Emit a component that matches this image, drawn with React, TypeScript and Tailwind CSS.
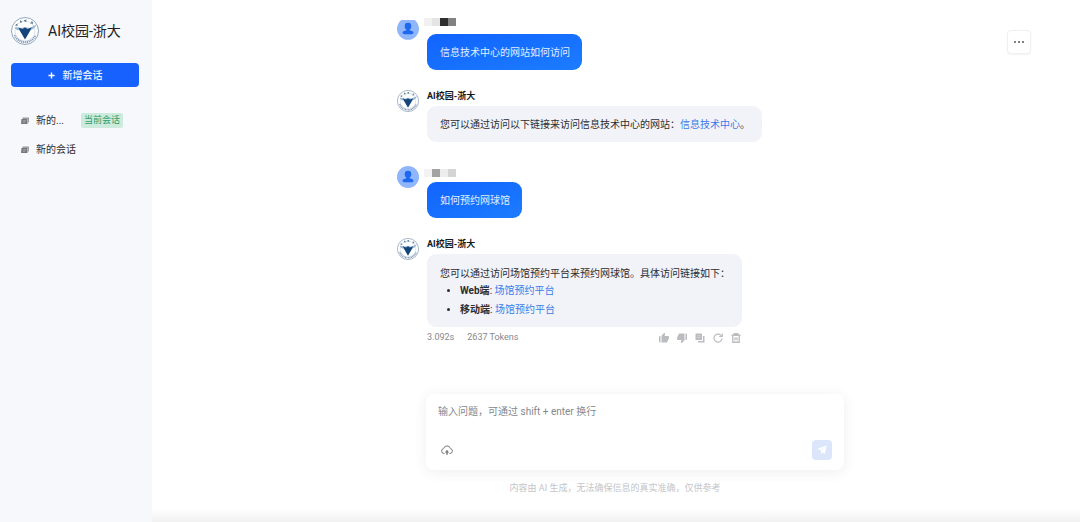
import type { ReactNode } from "react";
import { useState } from "react";
import { BiSolidDislike, BiSolidLike } from "react-icons/bi";

interface Session {
  id: number;
  title: string;
  current?: boolean;
}

const sessions: Session[] = [
  { id: 1, title: "新的...", current: true },
  { id: 2, title: "新的会话" },
];

const BOT_NAME = "AI校园-浙大";

function SchoolLogo({ className }: { className: string }) {
  return (
    <svg viewBox="0 0 56 56" className={className} fill="none" aria-hidden="true">
      <circle cx="28" cy="28" r="27" fill="#fff" stroke="#7891ae" strokeWidth="1.6" />
      <circle cx="28" cy="28" r="20" stroke="#b4c3d4" strokeWidth="1" />
      <path d="M7 36a22.500 22.500 0 0 0 42 0" stroke="#8299b5" strokeWidth="4" strokeDasharray="2.4 1.4" />
      <path
        d="m9 17 4-3m-3 0 3 4M18 8l4 2m-3-3 1 5M30 5l-2 5m-2-3 5 1M41 9l2 5m-4-1 5-3"
        stroke="#4d6f93"
        strokeWidth="1.8"
      />
      <path d="M7 21c5-1 9 0 13 1l8-2 8 2c5-2 9-4 15-7-2 6-7 10-13 12l-10 3-10-3c-5 0-9-2-11-6Z" fill="#9cb9d3" />
      <path d="m15 21 8 3 5-3 5 3 8-3-3 7-10 17-10-17-3-7Z" fill="#14467c" />
    </svg>
  );
}

function UserAvatar({ clipped = false }: { clipped?: boolean }) {
  return (
    <svg viewBox="0 0 22 22" className="size-[22px] shrink-0" aria-hidden="true">
      <path
        d={clipped ? "M4.5 2h13A11 11 0 1 1 4.5 2Z" : "M11 0a11 11 0 1 1 0 22 11 11 0 0 1 0-22Z"}
        fill="#8fb5fb"
      />
      <path
        d="M11 4.8a3.3 3.3 0 0 0-3.3 3.4c0 1.4.6 2.6 1.7 3.3v.8c-2.2.4-3.8 1.2-3.8 2.5 0 1 .6 1.4 1.6 1.4h7.6c1 0 1.6-.4 1.6-1.4 0-1.3-1.6-2.1-3.8-2.5v-.8c1.1-.7 1.7-1.9 1.7-3.3A3.3 3.3 0 0 0 11 4.8Z"
        fill="#1c68ee"
      />
    </svg>
  );
}

function SessionIcon() {
  return (
    <svg viewBox="0 0 16 16" className="size-2 shrink-0" aria-hidden="true">
      <path d="M3 1h13v10h-2V4H3V1Z" fill="#9a9da2" />
      <path d="M1 4h12v10H0L1 4Z" fill="#74777c" />
      <path d="M4 7.500h6M3.500 10.500h5" stroke="#c4c6ca" strokeWidth="1.200" />
    </svg>
  );
}

function CopyIcon() {
  return (
    <svg viewBox="0 0 20 20" className="size-2.5" aria-hidden="true">
      <path d="M2 1h11a1 1 0 0 1 1 1v12H2a1 1 0 0 1-1-1V2a1 1 0 0 1 1-1Z" fill="currentColor" />
      <path d="M16 6h3v13H6v-3h10V6Z" fill="currentColor" />
      <path d="M4 5.500h7M4 9h7" stroke="#e5e6e8" strokeWidth="1" />
    </svg>
  );
}

function RefreshIcon() {
  return (
    <svg viewBox="0 0 20 20" className="size-2.5" fill="none" stroke="currentColor" strokeWidth="2.400" aria-hidden="true">
      <path d="M18 11a8 8 0 1 1-2.500-6.800L18 6.500" />
      <path d="M18.500 1v6h-6" />
    </svg>
  );
}

function TrashIcon() {
  return (
    <svg viewBox="0 0 20 20" className="size-2.5" fill="none" stroke="currentColor" strokeWidth="2.600" aria-hidden="true">
      <path d="M1 4.500h18M6.500 4V1.500h7V4M3.500 5v13.500h13V5M8 8.500v6.500M12 8.500v6.500" />
    </svg>
  );
}

function CloudUploadIcon() {
  return (
    <svg viewBox="0 0 24 24" className="size-3" fill="none" stroke="currentColor" strokeWidth="2" aria-hidden="true">
      <path d="M7 19H6a5 5 0 0 1-.8-9.900 7 7 0 0 1 13.600 0A5 5 0 0 1 18 19h-1" />
      <path d="M12 11.500 7.800 17h2.700v4.500h3V17h2.700L12 11.500Z" fill="currentColor" stroke="none" />
    </svg>
  );
}

function SendIcon() {
  return (
    <svg viewBox="0 0 20 20" className="size-2.5" aria-hidden="true">
      <path d="M19 1 1 7.500l6.500 3.500L19 1Zm0 0-3.500 17-5-3.500L8 19v-7L19 1Z" fill="#fff" />
    </svg>
  );
}

// pixelated block that hides the user's name
function MaskedName({ dark = false }: { dark?: boolean }) {
  return (
    <div className="-ml-[3px] flex h-2 w-8" aria-hidden="true">
      {dark ? (
        <>
          <span className="flex-1 bg-[#f1f1f1]" />
          <span className="flex-1 bg-[#e5e5e5]" />
          <span className="flex-1 bg-[#303030]" />
          <span className="flex-1 bg-[#828282]" />
        </>
      ) : (
        <>
          <span className="flex-1 bg-[#f3f3f3]" />
          <span className="flex-1 bg-[#a3a3a3]" />
          <span className="flex-1 bg-[#ededed]" />
          <span className="flex-1 bg-[#d4d4d4]" />
        </>
      )}
    </div>
  );
}

function UserMessage({ children, first = false }: { children: ReactNode; first?: boolean }) {
  return (
    <div className="flex items-start gap-2">
      <UserAvatar clipped={first} />
      <div>
        <div className={first ? "h-4" : "h-4 pt-[3px]"}>
          <MaskedName dark={first} />
        </div>
        <p className="rounded-[9px] bg-linear-to-br from-[#1263ff] to-[#1d7cff] pt-[11px] pr-3 pb-[9px] pl-[13px] leading-4 text-[#e3eeff]">
          {children}
        </p>
      </div>
    </div>
  );
}

function BotMessage({ children, footer }: { children: ReactNode; footer?: ReactNode }) {
  return (
    <div className="flex items-start gap-2">
      <SchoolLogo className="size-[22px] shrink-0" />
      <div>
        <h2 className="mb-1 text-[9px] leading-3 font-bold text-[#17181a]">{BOT_NAME}</h2>
        <div className="rounded-[9px] bg-[#f2f3f8] pt-[11px] pr-3 pb-[9px] pl-[13px] text-[#2b2d31]">{children}</div>
        {footer}
      </div>
    </div>
  );
}

function MessageFooter() {
  const actions = [
    { label: "赞", icon: <BiSolidLike className="size-3" /> },
    { label: "踩", icon: <BiSolidDislike className="size-3" /> },
    { label: "复制", icon: <CopyIcon /> },
    { label: "重新生成", icon: <RefreshIcon /> },
    { label: "删除", icon: <TrashIcon /> },
  ];

  return (
    <div className="flex h-[22px] items-center justify-between text-[9px] text-[#86888c]">
      <div className="flex gap-[13px]">
        <span>3.092s</span>
        <span>2637 Tokens</span>
      </div>
      <div className="flex gap-1.5 text-[#bbbcbf]">
        {actions.map((action) => (
          <button
            key={action.label}
            type="button"
            aria-label={action.label}
            className="flex size-3 items-center justify-center"
          >
            {action.icon}
          </button>
        ))}
      </div>
    </div>
  );
}

function Sidebar() {
  return (
    <aside className="w-[152px] shrink-0 bg-[#f6f8fb] pt-[17px] pr-[13px] pl-[11px]">
      <div className="flex items-center gap-[9px]">
        <SchoolLogo className="size-7 shrink-0" />
        <h1 className="text-sm leading-5 whitespace-nowrap text-[#202124]">{BOT_NAME}</h1>
      </div>

      <button
        type="button"
        className="mt-[18px] flex h-6 w-full items-center justify-center gap-2 rounded bg-[#1762ff] font-medium text-[#eaf1ff]"
      >
        <svg viewBox="0 0 8 8" className="size-[7px]" stroke="#fff" strokeWidth="1.600" aria-hidden="true">
          <path d="M4 .5v7M.5 4h7" />
        </svg>
        新增会话
      </button>

      <ul className="mt-[19px]">
        {sessions.map((session) => (
          <li key={session.id}>
            <button type="button" className="flex h-[29px] w-full items-center gap-[7px] pl-2.5 text-left text-[#2c2e33]">
              <SessionIcon />
              <span className={session.current ? "w-[38px]" : ""}>{session.title}</span>
              {session.current ? (
                <span className="rounded-xs bg-[#cdebdd] px-[3px] text-[9px] leading-[15px] whitespace-nowrap text-[#2a9d6c]">
                  当前会话
                </span>
              ) : null}
            </button>
          </li>
        ))}
      </ul>
    </aside>
  );
}

function Composer() {
  const [text, setText] = useState("");

  return (
    <form
      className="ml-[29px] rounded-lg bg-white px-3 py-2.5 shadow-[0_2px_14px_rgba(60,70,100,0.09)]"
      onSubmit={(event) => event.preventDefault()}
    >
      <textarea
        aria-label="输入问题"
        value={text}
        onChange={(event) => setText(event.target.value)}
        placeholder="输入问题，可通过 shift + enter 换行"
        className="block h-9 w-full resize-none leading-4 outline-none placeholder:text-[#85878c]"
      />
      <div className="flex items-center justify-between">
        <button type="button" aria-label="上传文件" className="ml-[3px] text-[#77797d]">
          <CloudUploadIcon />
        </button>
        <button
          type="submit"
          aria-label="发送"
          className="flex size-5 items-center justify-center rounded bg-[#dce6fb]"
        >
          <SendIcon />
        </button>
      </div>
    </form>
  );
}

export default function App() {
  return (
    <div className="flex min-h-screen bg-white font-[Roboto,'Noto_Sans_CJK_SC',sans-serif] text-[10px]">
      <Sidebar />

      <main className="relative flex flex-1 flex-col bg-linear-to-t from-[#f1f1f1] to-white to-[14px] pl-[9px]">
        <button
          type="button"
          aria-label="更多"
          className="absolute top-[30px] right-[49px] flex size-6 items-center justify-center gap-0.5 rounded border border-[#f0f0f2] bg-white shadow-xs"
        >
          <span className="size-0.5 rounded-full bg-[#55575b]" />
          <span className="size-0.5 rounded-full bg-[#55575b]" />
          <span className="size-0.5 rounded-full bg-[#55575b]" />
        </button>

        <div className="mx-auto flex w-full max-w-[447px] flex-1 flex-col">
          <div className="flex flex-1 flex-col gap-5 pt-[18px]">
            <UserMessage first>信息技术中心的网站如何访问</UserMessage>
            <BotMessage>
              <p className="leading-4">
                您可以通过访问以下链接来访问信息技术中心的网站：
                <a href="#it-center" className="text-[#3b7be8]">
                  信息技术中心
                </a>
                。
              </p>
            </BotMessage>

            <div className="mt-1">
              <UserMessage>如何预约网球馆</UserMessage>
            </div>
            <BotMessage footer={<MessageFooter />}>
              <p className="leading-[18px]">您可以通过访问场馆预约平台来预约网球馆。具体访问链接如下：</p>
              <ul className="list-disc space-y-[3px] pl-5 leading-4">
                <li>
                  <strong>Web端</strong>:{" "}
                  <a href="#venue-web" className="text-[#3b7be8]">
                    场馆预约平台
                  </a>
                </li>
                <li>
                  <strong>移动端</strong>:{" "}
                  <a href="#venue-mobile" className="text-[#3b7be8]">
                    场馆预约平台
                  </a>
                </li>
              </ul>
            </BotMessage>
          </div>

          <Composer />
          <p className="ml-[29px] pt-3 pr-10 pb-7 text-center text-[9px] leading-3 text-[#c3c5c9]">
            内容由 AI 生成，无法确保信息的真实准确，仅供参考
          </p>
        </div>
      </main>
    </div>
  );
}
